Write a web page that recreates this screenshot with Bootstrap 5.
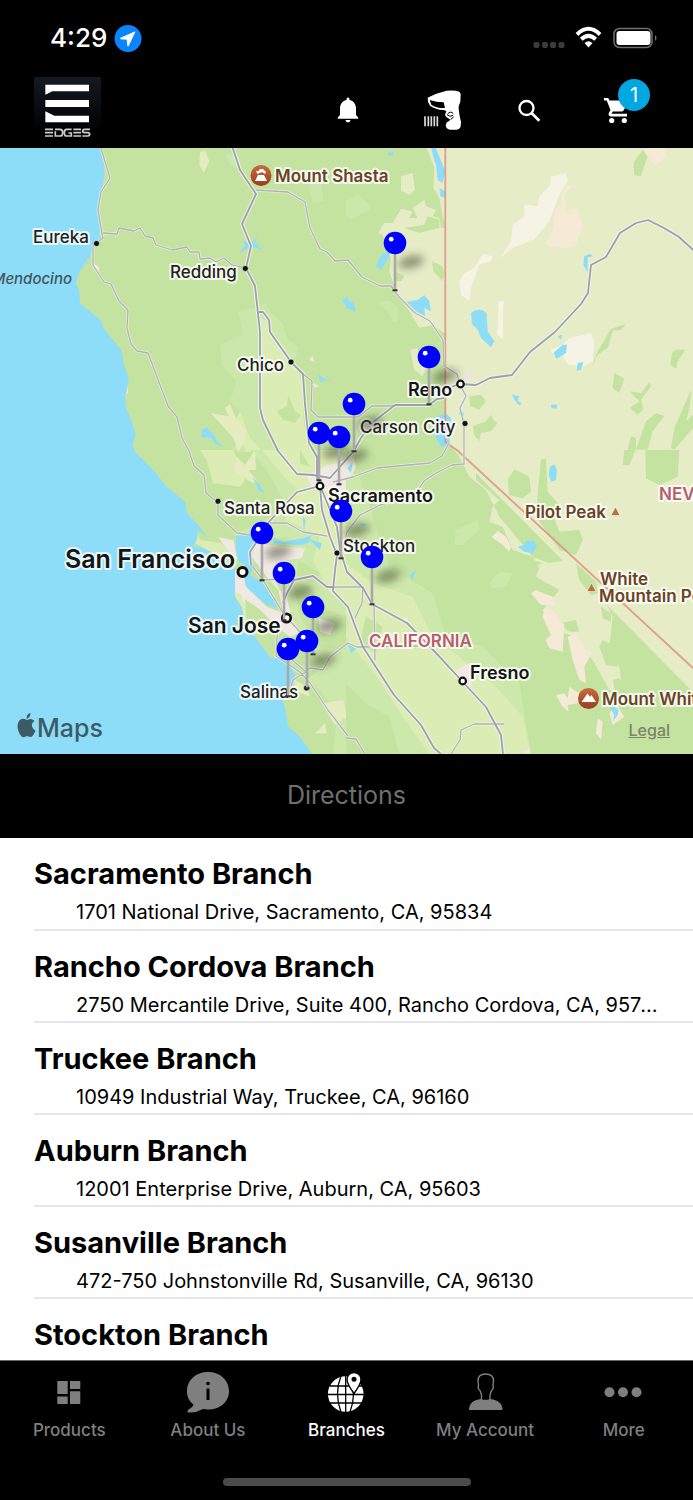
<!DOCTYPE html>
<html lang="en">
<head>
<meta charset="utf-8">
<meta name="viewport" content="width=device-width, initial-scale=1">
<title>Branches</title>
<link rel="stylesheet" href="https://cdn.jsdelivr.net/npm/bootstrap@5.3.0/dist/css/bootstrap.min.css">
<style>
  body { font-family: Inter, "Liberation Sans", sans-serif; color: #000; }
  .app { height: 100vh; }
  .status { padding: 18px 36px 0 50px; height: 77px; }
  .clock { font-size: 26px; line-height: 40px; font-weight: 500; }
  .tools { padding: 0 65px 0 34px; height: 71px; }
  .tools .btn { width: 24px; height: 66px; }
  .tools .scan { width: 40px; }
  .tool-icons { gap: 54px; }
  .tool-gap { margin-right: 9px; }
  .logo-tile { width: 67px; height: 64px; background: linear-gradient(#141a22, #000 85%); }
  .cart-count { width: 32px; height: 32px; left: 14px; top: 2px; background: #00a7e1; font-size: 20px; line-height: 32px; }
  .map { aspect-ratio: 693 / 606; }
  .map svg { display: block; width: 100%; height: 100%; }
  .legal { right: 23px; bottom: 13px; font-size: 16px; line-height: 22px; font-weight: 500; color: #7d8468; }
  .directions { height: 84px; font-size: 25px; }
  .directions:disabled { background: #000; color: #6f6f6f; opacity: 1; }
  .branches { overflow-y: auto; scrollbar-width: none; min-height: 0; }
  .branches::-webkit-scrollbar { display: none; }
  .branch { display: block; height: 92px; margin-left: 34px; padding: 17px 30px 0 0; border-bottom: 2px solid #e6e6e8; color: #000; text-decoration: none; }
  .branch:first-child { height: 93px; }
  .branch h2 { font-size: 29px; line-height: 38px; font-weight: 700; margin: 0; }
  .branch p { font-size: 20px; line-height: 38px; margin: 0 0 0 42px; }
  .tabs { background: #000; border-top: 1px solid #666; padding-top: 10px; height: 140px; }
  .tabs a { color: #7f7f7f; font-size: 17px; line-height: 22px; font-weight: 500; text-decoration: none; flex: 1 1 0; }
  .tabs a.active { color: #fff; }
  .tabs svg { display: block; margin: 0 auto 6px; }
  .home-bar { width: 248px; height: 8px; background: #4b4b4b; margin: 37px auto 0; }
  .lbl { font-size: 17px; font-weight: 500; fill: #222; stroke: #fff; stroke-opacity: .8; stroke-width: 4px; stroke-linejoin: round; paint-order: stroke; }
  .city { font-weight: 600; font-size: 18px; fill: #151515; }
  .peak { font-weight: 600; fill: #6a4324; }
  .state { font-weight: 600; fill: #b75e6d; }
</style>
</head>
<body>
<div class="app d-flex flex-column bg-white">
  <header class="bg-black text-white flex-shrink-0">
    <div class="status d-flex align-items-start justify-content-between">
      <div class="d-flex align-items-center gap-2">
        <span class="clock">4:29</span>
        <svg width="26" height="28" viewBox="1 0 26 28" overflow="visible" aria-hidden="true"><circle cx="14" cy="14.500" r="13.500" fill="#0a84ff"/><path d="M20.800 7.500 6.500 13.800q-1 .7.200 1.400l6 .5.600 6q.6 1.200 1.500.1L21.200 8.200q.2-.8-.4-.7z" fill="#fff"/></svg>
      </div>
      <svg width="124" height="40" viewBox="0 0 124 40" aria-label="Wi-Fi and battery">
        <g fill="#3c3c3e"><rect x="0.500" y="24" width="6" height="6" rx="2"/><rect x="9" y="24" width="6" height="6" rx="2"/><rect x="17" y="24" width="6" height="6" rx="2"/><rect x="25.500" y="24" width="6" height="6" rx="2"/></g>
        <g fill="none" stroke="#fff" stroke-width="4"><path d="M44 16.500Q55.500 5 67 16.500"/><path d="M48.300 21.300Q55.500 14.500 62.700 21.300"/></g><path d="M51.500 25q4-3.500 8 0L55.500 29.500z" fill="#fff"/>
        <rect x="81" y="10.500" width="38" height="19" rx="5.500" fill="none" stroke="#6f6f6f" stroke-width="1.500"/><rect x="83.500" y="13" width="34" height="14" rx="3" fill="#fff"/><path d="M122 17v6q3-3 0-6z" fill="#777"/>
      </svg>
    </div>
    <nav class="tools d-flex justify-content-between align-items-start" aria-label="Tools">
      <div class="logo-tile">
        <svg width="67" height="64" viewBox="0 0 201 192" role="img" aria-label="Edges">
          <g fill="#fff"><path d="M34 23H165V43H55L34 53zM34 69H165V90H34zM34 103 61 116H165V136H34z"/></g>
          <g fill="none" stroke="#ccc" stroke-width="5"><path d="M57 157H33M57 167H33M57 177H33M63 157H78Q86 157 86 167T78 177H64V163M113 157H98Q91 157 91 167T98 177H112V168H103M141 157H118M141 167H118M141 177H118M168 157H152Q146 157 146 162T152 167H162Q167 167 167 172T161 177H145"/></g>
        </svg>
      </div>
      <div class="tool-icons d-flex">
        <button class="btn p-0 border-0 tool-gap" aria-label="Notifications"><svg width="24" height="30" viewBox="0 0 24 30"><path d="M12 2.500q1.600 0 1.600 2.400C18.500 6 20 10 20 13.500V20l2.200 2.500v1.200H1.800V22.500L4 20v-6.500C4 10 5.500 6 10.400 4.900 10.400 2.500 12 2.500 12 2.500zM9.400 25h5.200q-.5 2.400-2.600 2.400t-2.600-2.400z" fill="#fff"/></svg></button>
        <button class="btn p-0 border-0 scan" aria-label="Scan barcode"><svg width="40" height="42" viewBox="0 0 120 126"><path d="M14 26Q40 12 71 5 95 3 109 8L113 14 112 38Q106 50 107 60 110 85 114 98L113 112Q110 122 101 122H80Q69 120 68 108 70 98 78 96L82 92 70 84 66 78 70 66 61 63Q38 62 21 50 13 40 14 26z" fill="#fff"/><path d="M20 33Q40 40 62 40L66 57Q40 58 25 47z" fill="#000"/><path d="M73 76q10-12 18-2M73 78q8 7 17 1M83 91q6-2 8-8" stroke="#000" stroke-width="3" fill="none"/><path d="M6 82V112M16 82V112M25 82V112M34 82V112M43 82V112" stroke="#ddd" stroke-width="5"/></svg></button>
        <button class="btn p-0 border-0 tool-gap" aria-label="Search"><svg width="24" height="24" viewBox="0 0 24 24"><circle cx="9.500" cy="9" r="7" fill="none" stroke="#fff" stroke-width="2.300"/><path d="M14.500 14 22.300 21.800" stroke="#fff" stroke-width="2.800"/></svg></button>
        <button class="btn p-0 border-0 position-relative" aria-label="Cart, 1 item"><svg width="26" height="28" viewBox="0 0 26 28"><path d="M0 2H4.200L5.500 4.500H23Q25 5 24 7L19.500 14.500Q19 15.500 17.500 15.500H8.700L7.500 17.800H23V20.400H6.500Q3.500 19.600 5 16.800L6.500 14 2.700 4.600H0z" fill="#fff"/><circle cx="7.700" cy="24.500" r="2.600" fill="#fff"/><circle cx="20.300" cy="24.500" r="2.600" fill="#fff"/></svg>
          <span class="cart-count position-absolute rounded-circle text-white">1</span></button>
      </div>
    </nav>
  </header>

  <section class="map position-relative flex-shrink-0 overflow-hidden" aria-label="Map of branches">
    <svg viewBox="0 0 693 606" preserveAspectRatio="xMidYMid slice">
      <defs>
        <filter id="soft" x="-60%" y="-100%" width="220%" height="300%"><feGaussianBlur stdDeviation="4"/></filter>
        <linearGradient id="peakFill" x1="0" y1="0" x2="0" y2="1"><stop offset="0" stop-color="#c86a3c"/><stop offset="1" stop-color="#983f20"/></linearGradient>
        <g id="pinShadow"><ellipse cx="16" cy="19" rx="13" ry="6" transform="rotate(-14 16 19)" fill="#303820" opacity=".5" filter="url(#soft)"/></g>
        <g id="pin"><path d="M0 8V47" stroke="#a9a9a9" stroke-width="2.600"/><path d="M-2.500 47.300H2.500" stroke="#333" stroke-width="2"/><circle r="11.300" fill="#00f"/><circle cx="-3.800" cy="-3.800" r="2.400" fill="#fff"/></g>
      </defs>
      <rect width="693" height="606" fill="#c4e3a1"/>

      <!-- northern coast and valley -->
      <g transform="scale(.33333)">
        <path fill="#cbe7aa" d="M715 490 770 480 795 465 810 490 850 530 860 570 895 600 880 650 905 690 905 912H690L735 850 720 790 690 760 710 700 665 650 660 590 730 560z"/>
        <path fill="#dbecb4" d="M776 505 800 520 808 555 870 640 905 690 912 830 935 912H835L785 815 780 550zM700 830 720 790 750 870 790 912H740z"/>
        <path fill="#c4e3a1" d="M830 790 860 775 865 740 885 790 902 800 885 825 850 815z"/>
        <path fill="#e4ecc0" d="M600 12 615 8 628 40 612 75 598 50zM632 795 685 805 675 780 690 768 705 805 740 850 735 880 715 912 700 870z"/>
        <path fill="#cbe7aa" d="M675 20 700 15 718 60 690 50zM925 110 965 105 970 160 940 165z"/>
        <path fill="#8dddf8" d="M-9-9H297L312 50V95L300 140 297 190 300 250 285 292 270 325 240 370 228 405 238 430 240 465 305 520 310 540 365 608 372 650 386 690 384 715 376 740 378 780 395 820 407 860 398 890 405 915H-9zM605 845 620 838 645 865 650 880 672 898 645 888 635 870 605 868zM717 315 735 295 728 275 750 290 772 263 762 290 790 285 770 293 790 305 750 297 725 312zM955 675 968 690 995 700 975 697 960 703zM1025 460 1045 445V480zM285 275 300 262 303 280zM255 340 270 345 262 348z"/>
        <path fill="#f0e8e0" d="M280 345 298 358 295 373 280 360zM928 635 937 622 943 642zM940 705 957 715 943 720zM378 740 384 710 384 735z"/>
      </g>

      <!-- Nevada side -->
      <g transform="translate(346 0) scale(.33333)">
        <path fill="#e6ecc5" d="M240-5 265 60 262 120 280 150 290 205 295 220 300 880 345 930 2000 2600H1050V-5z"/>
        <path fill="#e6ecc5" d="M165 85 200 75 207 125 190 140 165 128zM96 255 115 225 140 225 165 183 200 190 190 210 215 210 200 180 235 155 240 175 270 185 260 205 280 210 285 240 300 240V560L260 530 220 540 190 490 150 430 130 370 135 330 110 260z"/>
        <path fill="#c4e3a1" d="M175 240 235 230 245 205 280 215 280 240 220 255zM258 340 290 355 295 375 290 400 262 370zM148 370 175 385 165 400 148 400z"/>
        <path fill="#cbe7aa" d="M0 160 35 140 75 170 70 185 15 215 0 200zM100 460 130 458 155 480 155 520 140 520 125 490 100 470z"/>
        <path fill="#f5f3e3" d="M462 330 495 280 500 230 535 205V168L575 175 580 145 610 115 615 85 660 75 665 100 640 140 610 220 565 275 500 300zM385 360 410 317 440 325 435 340 400 350 375 420 370 460 345 440 340 400 355 375zM457 460H475L470 490 472 573 453 560 457 510zM613 605 650 590 670 570 735 555 745 580 740 640 715 655 665 650 650 620 625 625z"/>
        <path fill="#f4ead5" d="M625 185 645 175 650 120 680 110 655 145 665 190 695 180 710 235 690 290 665 300 610 298 598 285 620 245zM893 0H960L962 25 930 52 900 25z"/>
        <path fill="#c4e3a1" d="M890 5 905 25 885 85 865 82 862 45zM738 655 755 610 795 542 842 527 825 545 800 548 785 600 755 620zM990 605 1018 605 995 640 990 662 973 650 978 615zM805 675 835 692 820 735 800 720zM850 730 885 735 910 703 915 715 885 755 892 785 875 800 852 780 880 760zM370 745 405 740 420 760 400 785 372 775zM380 835 420 820 435 800 445 820 455 825 435 850 405 855 400 880 385 862zM870 905 900 820 930 795 955 805 920 850 905 905zM975 900 985 840 1035 725 1032 775 1020 820 1041 800V840L985 905zM845 905 855 865 870 870V905z"/>
        <path fill="#8dddf8" d="M255-3H268L292 55 298 70 290 105 275 95 270 50 263 30zM280 120 298 130V150L283 145zM125 15 140 10 142 22 127 23zM90 355 105 320 130 310 128 330 105 365zM182 462 215 455 235 442 250 460 255 490 235 480 237 505 210 490zM375 495Q400 475 422 495L425 550 445 580 435 598 405 570 395 545 378 528zM622 615 650 590 663 590 660 615 632 632zM635 565 648 560 645 575zM692 668 695 645 712 642 705 665zM712 350 715 325 730 317 742 325 725 328 725 375zM498 740 520 745 515 760 527 765 520 773 505 755zM614 770 634 770 632 782 616 780zM270 805 300 797 315 810 310 890 285 897 268 865zM0 452 25 468 28 492 0 480zM340 785 353 795V805L340 800z"/>
        <path fill="#ece4e3" d="M357 675 378 662V695L355 705z"/>
        <path fill="#e6ecc5" d="M193 605 215 600 215 625 240 660 230 685 205 665z"/>
      </g>

      <!-- Bay Area and southern coast -->
      <g transform="translate(0 302) scale(.33333)">
        <path fill="#cde8ab" d="M750 0H1041V912H1000L1010 790 960 720 920 690 985 640 900 570 840 420 700 250 760 230 830 190 850 150 800 60z"/>
        <path fill="#dbecb4" d="M785 0H1041V470L990 430 940 330 960 260 860 210 850 190 900 120 860 90zM560 265 600 250 630 260 670 285 700 270 710 330 650 315zM705 420 735 470 790 585 770 590 730 520zM640 100 620 30 600 0H700L735 90 720 110z"/>
        <path fill="#c4e3a1" d="M415 0H600L620 80 640 140 660 190 700 230 670 280 600 270 560 160 480 90zM895 330 960 370 940 400 890 380zM880 395 930 410 980 480 1041 500V600L960 590 900 500zM900 0 930 50 900 40z"/>
        <path fill="#e4ecc0" d="M710 20 735 45 765 0 768 60 745 60 770 90 760 100 705 65zM965 760 1030 750 1041 800 1005 825zM945 850 975 820 980 850zM885 690 920 710 930 740 880 720z"/>
        <path fill="#f0e8e2" d="M655 262 700 270 712 330 690 310zM755 320 770 280 860 290 915 295 905 325 860 330 870 350 830 345 850 395 872 490 895 550 870 560 830 530 750 480 705 430 700 360 730 365 760 430 800 470 850 490 835 420 800 380zM955 505 1005 520 990 555 960 545zM920 80 970 50 1041 30V130L990 125 940 120zM820 600 840 610 825 628z"/>
        <path fill="#dbecb4" d="M703 425 722 432 738 475 775 560 790 590 775 580 735 520 722 475 704 450z"/>
        <path fill="#c4e3a1" d="M735 448 775 475 805 505 832 545 862 565 880 605 840 625 800 605 765 560 740 510zM815 375 850 400 845 430z"/>
        <path fill="#8dddf8" d="M-9-5H395L460 60 500 110 555 155 562 190 590 220 625 265 593 240 592 265 580 290 600 290 640 310 680 340 705 350V440L725 470 735 520 780 580 810 622 865 628 885 675 880 712 850 750 858 790 865 830 900 860 938 915H-9z"/>
        <path fill="#8dddf8" d="M708 258 750 250 765 265 755 300 760 350 750 375 790 400 812 435 838 465 828 473 800 465 770 440 738 410 732 380 735 345 715 335 708 295zM820 262 850 275 910 265 935 255 925 280 900 285 820 280zM920 265 965 280 960 300 935 275zM755 80 780 105 793 130 775 120 768 100zM908 200 917 210 912 245z"/>
      </g>

      <!-- central valley and Sierra -->
      <g transform="translate(346 302) scale(.33333)">
        <path fill="#cde8ab" d="M0 60 40 80 130 350 260 430 300 560 410 590 520 700 555 912H0z"/>
        <path fill="#dbecb4" d="M0 340 80 400 200 440 260 560 340 620 450 710 530 800 555 912H250L170 800 100 690 20 590 0 560z"/>
        <path fill="#c4e3a1" d="M0 700 60 760 130 800 160 912H0zM60 500 110 530 90 610 40 580z"/>
        <path fill="#cde8ab" d="M330 240 395 210 400 240 350 285 325 285zM430 400 460 365 500 370 480 410 440 415z"/>
        <path fill="#e6ecc5" d="M330 0 390 50 390 90 460 150 440 170 430 215 470 230 500 300 560 320 610 340 660 330 700 370 770 440 800 500 790 600 820 650 830 720 790 720 740 630 690 560 640 545 590 480 640 420 570 380 580 355 560 320 460 200 420 120 370 80z"/>
        <path fill="#c4e3a1" d="M485 90 505 58 550 80 555 125 530 145 490 135zM585 30 600 25 605 125 650 175 625 205 640 245 700 240 710 270 690 315 640 300 570 200 575 130zM830 45 835 0H868L850 45zM900 85 898 0H1000L995 80 940 105zM535 365 545 325 590 340 560 350zM690 340 750 395 755 430 735 435 700 390zM760 590 770 570 815 590 815 650 780 645zM765 470 795 490 795 515 770 505zM640 520 690 510 700 545 670 545zM720 685 745 720 780 800 795 912H745L730 850zM1020 840 1041 825V900L1015 890zM800 690 820 685 850 720 855 750 810 735z"/>
        <path fill="#f4ead5" d="M437 260 455 243 480 260 495 290 490 305 470 285zM555 430 570 420 620 440 625 465 585 465zM595 475 625 485 655 525 650 605 610 595 598 570 615 555 590 500zM665 560 690 550 720 600 738 610 715 650 720 700 700 690 680 630zM630 735 655 730 665 745 670 710 700 730 695 760 665 765 668 785 650 770zM790 790 810 760 835 800 800 825zM755 805 770 815 765 870 750 850z"/>
        <path fill="#f0e8e2" d="M330 660 370 640 390 680 370 710 340 700zM0 20 20 10 30 50 10 90 0 85zM170 510 185 500 185 520zM530 905 550 895V912z"/>
        <path fill="#8dddf8" d="M612 50 625 43 633 60 630 90 615 95 608 75zM515 290 535 285 540 272 565 272 573 290 560 310 535 305zM792 775 805 768 818 780 815 795 800 815 805 795zM5 55 20 35 15 70zM40 218 65 222 50 230zM190 375 210 360 200 390zM5 580 30 597 15 610z"/>
      </g>

      <!-- state border -->
      <path d="M445.300 0V294L458 303 693 520" fill="none" stroke="#e08a80" stroke-opacity=".8" stroke-width="1.800"/>

      <!-- roads: pale casing below, grey line above -->
      <defs>
        <path id="roadMain" d="M231-5 240 22 256 46 242 76 251 98 246 120 255 138 260 184 260 260 263 272 278 303 297 326 313 327 330 330 353 304 361 290 372 275 386 264 395 257 429 257 437 251 444 250 M259 164 263 164 269 172 270 184 291 214 303 226 305 256 309 295 317 309 317 332 M320 338 322 362 330 389 337 407 335 422 333 443 348 459 363 499 394 547 421 577 434 600 441 606 M322 342 337 379 340 402 347 424 363 440 372 456 407 475 436 505 461 532 486 559 501 587 503 606 M320 338 297 344 268 375 263 384 250 404 251 417 M283 455 287 445 294 432 313 428 327 439 333 439 M445 241 460 236 476 237 490 230 512 227 530 204 555 184 581 156 588 145 591 117 606 109 620 85 636 75 648 72 664 80 679 89 700 108"/>
        <path id="roadMinor" d="M100-3 110 30 101 44 98 62 102 86 103 90 93 98 93 117 104 134 111 136 119 153 128 162 127 180 131 196 137 203 148 205 168 258 177 269 182 290 189 303 194 318 204 327 206 345 218 355 218 367 237 385 250 387 M103 85 117 86 119 80 134 83 140 80 145 88 153 90 156 97 172 102 187 99 190 104 199 104 200 111 210 110 216 114 224 110 232 117 246 120 M256 42 288 44 305 54 310 80 320 101 327 104 335 113 348 112 362 129 380 138 391 138 399 149 415 165 430 173 443 192 444 218 457 226 460 237 466 248 460 260 464 276 464 316 452 317 436 325 424 333 415 347 380 357 360 367 347 384 343 400 M303 226 312 233 311 262 318 269 358 269 372 258 395 258 M333 334 353 329 377 320 430 315 442 308 449 295 M270 375 287 375 303 384 327 388 M253 419 263 432 283 465 307 492 M263 432 283 431 294 426 M278 474 276 508 300 524 310 535 328 562 348 588 M290 510 306 524 310 520 323 522 330 509 348 495 357 499 418 498 M306 524 293 532 288 550 M333 439H363L362 455 355 470 M374 457 375 512 M504 576H474L461 582 460 592 451 606 M346 590 356 591 365 606"/>
      </defs>
      <g fill="none" stroke-linejoin="round">
        <use href="#roadMinor" stroke="#f4f5e8" stroke-opacity=".7" stroke-width="2.800"/>
        <use href="#roadMain" stroke="#f6f6ee" stroke-opacity=".8" stroke-width="4"/>
        <use href="#roadMinor" stroke="#b0b2b8" stroke-width="1.300"/>
        <use href="#roadMain" stroke="#9b9fae" stroke-width="1.800"/>
      </g>

      <g fill="#111" stroke="#fff" stroke-opacity=".6"><circle cx="96.500" cy="95.500" r="3"/><circle cx="245.300" cy="120.500" r="3"/><circle cx="291" cy="214" r="3"/><circle cx="465" cy="275.500" r="3"/><circle cx="218" cy="353.300" r="3"/><circle cx="337" cy="405" r="3"/><circle cx="306.500" cy="540" r="3"/></g>
      <g fill="#fff" stroke="#111" stroke-width="2.200"><circle cx="460.500" cy="236" r="3.300"/><circle cx="320" cy="338" r="3.300"/><circle cx="462.700" cy="533" r="3.300"/><circle cx="286.500" cy="470" r="4.200" stroke-width="2.700"/><circle cx="242.500" cy="424" r="4.500" stroke-width="3"/></g>
      <circle cx="261" cy="27.500" r="10.500" fill="url(#peakFill)"/><path d="M255 33H267L264 27H258zM257.500 26 256 23 258.500 23 260 21H263L266 24 265 26 262 24z" fill="#fff"/>
      <circle cx="588.500" cy="550.500" r="10.500" fill="url(#peakFill)"/><path d="M581.500 554 587.500 545.500 590 549 591.500 547 596 554z" fill="#fff"/>
      <path d="M611 367.500 615.500 359 620 367.500zM587 443.500 591.500 435 596 443.500z" fill="#b7703f" stroke="#fff" stroke-opacity=".5"/>

      <g class="lbl">
        <text x="33" y="95">Eureka</text><text x="170" y="130">Redding</text><text x="237" y="223">Chico</text><text x="360" y="285">Carson City</text><text x="224" y="366">Santa Rosa</text><text x="343" y="404">Stockton</text><text x="240" y="550">Salinas</text>
      </g>
      <text x="72" y="136" text-anchor="end" font-size="15" font-style="italic" font-weight="500" fill="#43545c">Mendocino</text>
      <text class="lbl city" x="408" y="248">Reno</text><text class="lbl city" x="328" y="354">Sacramento</text><text class="lbl city" x="470" y="531">Fresno</text>
      <text class="lbl city" x="65" y="420" style="font-size:25px">San Francisco</text><text class="lbl city" x="188" y="485" style="font-size:21px">San Jose</text>
      <text class="lbl peak" x="275" y="34">Mount Shasta</text><text class="lbl peak" x="525" y="370">Pilot Peak</text><text class="lbl peak" x="600" y="437">White</text><text class="lbl peak" x="599" y="454">Mountain Peak</text><text class="lbl peak" x="602" y="557">Mount Whitney</text>
      <text class="lbl state" x="369" y="499">CALIFORNIA</text><text class="lbl state" x="659" y="352">NEVADA</text>

      <g fill="#3d5b67"><path d="M27.500 572Q31 569.500 34.500 573 30 576 33 580.500 34 582 35.500 582.500 33.500 588 31 589 29.500 589 27 588 24 589.200 23 589.200C20 588.500 14 577 20.500 571.500Q23.500 570 26.500 571.700zM26.500 571Q26.300 566 30.500 565 30.500 569.500 26.500 571z"/><text x="37" y="589" font-size="25" font-weight="500">Maps</text></g>

      <g><use href="#pinShadow" x="395" y="95"/><use href="#pinShadow" x="429" y="209"/><use href="#pinShadow" x="354" y="256"/><use href="#pinShadow" x="319" y="285"/><use href="#pinShadow" x="339" y="289"/><use href="#pinShadow" x="341" y="363"/><use href="#pinShadow" x="262" y="385"/><use href="#pinShadow" x="372" y="409"/><use href="#pinShadow" x="284" y="425"/><use href="#pinShadow" x="313" y="459"/><use href="#pinShadow" x="307" y="493"/></g>
      <g><use href="#pin" x="395" y="95"/><use href="#pin" x="429" y="209"/><use href="#pin" x="354" y="256"/><use href="#pin" x="319" y="285"/><use href="#pin" x="339" y="289"/><use href="#pin" x="341" y="363"/><use href="#pin" x="262" y="385"/><use href="#pin" x="372" y="409"/><use href="#pin" x="284" y="425"/><use href="#pin" x="313" y="459"/><use href="#pin" x="307" y="493"/><use href="#pin" x="288" y="501"/></g>
    </svg>
    <a class="legal position-absolute" href="#legal">Legal</a>
  </section>

  <button class="directions btn rounded-0 border-0 w-100 flex-shrink-0" disabled>Directions</button>

  <main class="branches flex-grow-1">
    <a class="branch" href="#sacramento"><h2>Sacramento Branch</h2><p class="text-truncate">1701 National Drive, Sacramento, CA, 95834</p></a>
    <a class="branch" href="#rancho-cordova"><h2>Rancho Cordova Branch</h2><p class="text-truncate">2750 Mercantile Drive, Suite 400, Rancho Cordova, CA, 95742</p></a>
    <a class="branch" href="#truckee"><h2>Truckee Branch</h2><p class="text-truncate">10949 Industrial Way, Truckee, CA, 96160</p></a>
    <a class="branch" href="#auburn"><h2>Auburn Branch</h2><p class="text-truncate">12001 Enterprise Drive, Auburn, CA, 95603</p></a>
    <a class="branch" href="#susanville"><h2>Susanville Branch</h2><p class="text-truncate">472-750 Johnstonville Rd, Susanville, CA, 96130</p></a>
    <a class="branch" href="#stockton"><h2>Stockton Branch</h2></a>
  </main>

  <footer class="tabs flex-shrink-0">
    <nav class="d-flex text-center" aria-label="Main">
      <a href="#products"><svg width="44" height="42" viewBox="0 0 44 42" fill="currentColor"><path d="M10.300 10H20.700V23H10.300zM23 10H33.300V18H23zM10.300 25.500H20.700V33H10.300zM23 20.300H33.300V33H23z"/></svg>Products</a>
      <a href="#about"><svg width="44" height="42" viewBox="0 0 44 42"><path d="M22 1C34 1 43 9 43 20S34 38.500 22 38.500L17 38Q10 42 3 41.500 0 41.500 2.500 38.500 7 36 7.500 33.500C3 30 1 26 1 20 1 9 10 1 22 1z" fill="currentColor"/><circle cx="22" cy="12.500" r="1.800" fill="#000"/><path d="M22 17.500V29" stroke="#000" stroke-width="3"/></svg>About Us</a>
      <a href="#branches" class="active" aria-current="page"><svg width="44" height="42" viewBox="0 0 44 42"><circle cx="21.700" cy="23" r="17.800" fill="#fff"/><path d="M3 23.500H41M6 15H38M6 32H38M21.700 4V41M17 5Q10 22.500 17 41M26 5Q33 22.500 26 41" fill="none" stroke="#000" stroke-width="1.300"/><path d="M30 22.500Q23 13 23 8.500A7 7 0 0 1 37 8.500Q37 13 30 22.500z" fill="#fff" stroke="#000" stroke-width="1.400"/><circle cx="30" cy="8.300" r="2.500" fill="#000"/></svg>Branches</a>
      <a href="#account"><svg width="44" height="42" viewBox="0 0 44 42"><path d="M22.500 3Q30.500 3 30.500 10L30 14Q31 18 28.500 19.500L27 24V29.500H18.500V24L17 19.500Q14.500 18 15.500 14L15 10Q15 3 22.500 3z" fill="none" stroke="currentColor" stroke-width="1.400"/><path d="M18 28Q22.500 30.500 27 28 39.500 29.500 39.500 39H6Q6 29.500 18 28z" fill="currentColor"/></svg>My Account</a>
      <a href="#more"><svg width="44" height="42" viewBox="0 0 44 42" fill="currentColor"><circle cx="7.500" cy="21.300" r="5"/><circle cx="21" cy="21.300" r="5"/><circle cx="34.500" cy="21.300" r="5"/></svg>More</a>
    </nav>
    <div class="home-bar rounded-pill"></div>
  </footer>
</div>
<script src="https://cdn.jsdelivr.net/npm/bootstrap@5.3.0/dist/js/bootstrap.bundle.min.js"></script>
</body>
</html>
